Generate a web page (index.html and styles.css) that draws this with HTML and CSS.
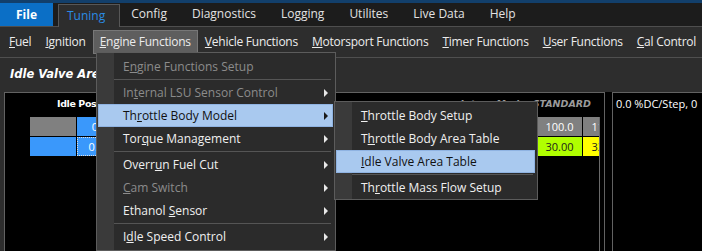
FILE: index.html
```html
<!DOCTYPE html>
<html lang="en">
<head>
    <meta charset="UTF-8">
    <title>Tuning - Idle Valve Area Table</title>
    <link rel="stylesheet" href="styles.css">
</head>
<body>
    <div class="app">
        <div class="topline"></div>
        <div class="tabs">
            <div class="tab file">File</div>
            <div class="tab active">Tuning</div>
            <div class="tab">Config</div>
            <div class="tab">Diagnostics</div>
            <div class="tab">Logging</div>
            <div class="tab">Utilites</div>
            <div class="tab">Live Data</div>
            <div class="tab">Help</div>
        </div>
        <div class="menubar">
            <span class="menu-item"><u>F</u>uel</span>
            <span class="menu-item"><u>I</u>gnition</span>
            <span class="menu-item open"><u>E</u>ngine Functions</span>
            <span class="menu-item"><u>V</u>ehicle Functions</span>
            <span class="menu-item"><u>M</u>otorsport Functions</span>
            <span class="menu-item"><u>T</u>imer Functions</span>
            <span class="menu-item"><u>U</u>ser Functions</span>
            <span class="menu-item"><u>C</u>al Control</span>
        </div>
        <div class="title-row">Idle Valve Area Table</div>
        <div class="workarea">
            <div class="table-panel">
                <div class="panel-head">
                    <span class="axis-title">Idle Position (%)</span>
                    <span class="mode">Interp Mode: STANDARD</span>
                </div>
                <div class="grid-wrap">
                    <div class="grid">
                        <div class="cell corner"></div>
                        <div class="cell head sel">0.0</div>
                        <div class="cell head">10.0</div>
                        <div class="cell head">20.0</div>
                        <div class="cell head">30.0</div>
                        <div class="cell head">40.0</div>
                        <div class="cell head">50.0</div>
                        <div class="cell head">60.0</div>
                        <div class="cell head">70.0</div>
                        <div class="cell head">80.0</div>
                        <div class="cell head">90.0</div>
                        <div class="cell head">100.0</div>
                        <div class="cell head">110.0</div>

                        <div class="cell row-head sel"></div>
                        <div class="cell active">0.00</div>
                        <div class="cell c1">3.00</div>
                        <div class="cell c2">6.00</div>
                        <div class="cell c3">9.00</div>
                        <div class="cell c4">12.00</div>
                        <div class="cell c5">15.00</div>
                        <div class="cell c6">18.00</div>
                        <div class="cell c7">21.00</div>
                        <div class="cell c8">24.00</div>
                        <div class="cell c9">27.00</div>
                        <div class="cell c10">30.00</div>
                        <div class="cell c11">33.00</div>
                    </div>
                </div>
            </div>
            <div class="splitter"></div>
            <div class="info-panel">0.0 %DC/Step, 0</div>
        </div>

        <div class="dropdown main-menu">
            <div class="item disabled"><span>E<u>n</u>gine Functions Setup</span></div>
            <div class="sep"></div>
            <div class="item disabled sub"><span>In<u>t</u>ernal LSU Sensor Control</span></div>
            <div class="item hover sub"><span>Th<u>r</u>ottle Body Model</span></div>
            <div class="item sub"><span>Tor<u>q</u>ue Management</span></div>
            <div class="sep"></div>
            <div class="item sub"><span>Overr<u>u</u>n Fuel Cut</span></div>
            <div class="item disabled sub"><span><u>C</u>am Switch</span></div>
            <div class="item sub"><span>Ethanol <u>S</u>ensor</span></div>
            <div class="sep"></div>
            <div class="item sub"><span>I<u>d</u>le Speed Control</span></div>
        </div>

        <div class="dropdown sub-menu">
            <div class="item"><span><u>T</u>hrottle Body Setup</span></div>
            <div class="item"><span>T<u>h</u>rottle Body Area Table</span></div>
            <div class="item hover"><span><u>I</u>dle Valve Area Table</span></div>
            <div class="sep"></div>
            <div class="item"><span>Th<u>r</u>ottle Mass Flow Setup</span></div>
        </div>
    </div>
</body>
</html>
```

FILE: styles.css
```css
body {
    margin: 0;
    background-color: #2d2d2d;
    font-family: "Open Sans", sans-serif;
    font-size: 12px;
    color: #ececec;
    overflow: hidden;
}

.app {
    position: relative;
    height: 251px;
}

.topline {
    height: 3px;
    background-color: #123f6b;
}

/* ribbon tabs */
.tabs {
    display: flex;
    height: 23px;
    background-color: #1c1c1c;
    border-bottom: 1px solid #4e4e4e;
}

.tab {
    padding: 0 14px 0 8px;
    margin-left: 3px;
    line-height: 22px;
    color: #e2e2e2;
    white-space: nowrap;
}

.tab.file {
    width: 53px;
    margin-left: 0;
    padding: 0;
    text-align: center;
    background-color: #0b6fc6;
    color: #ffffff;
    font-weight: bold;
    line-height: 23px;
}

.tab.active {
    margin-left: 5px;
    margin-top: 1px;
    height: 22px;
    background-color: #2d2d2d;
    border: 1px solid #575757;
    border-bottom: none;
    color: #2a8be4;
}

/* menu bar */
.menubar {
    display: flex;
    align-items: center;
    height: 30px;
    padding-left: 2px;
    border-bottom: 1px solid #4f4f4f;
}

.menu-item {
    padding: 3px 6px;
    line-height: 16px;
    border: 1px solid transparent;
    color: #ececec;
    letter-spacing: -0.24px;
    white-space: nowrap;
}

.menu-item.open {
    background-color: #5e5e5e;
    border-color: #777777;
}

u {
    text-underline-offset: 1px;
}

.title-row {
    height: 34px;
    padding-left: 10px;
    line-height: 32px;
    font-family: "DejaVu Sans", sans-serif;
    font-size: 11.5px;
    font-weight: bold;
    font-style: italic;
    color: #ffffff;
    white-space: nowrap;
}

/* work area */
.workarea {
    display: flex;
    height: 159px;
}

.table-panel {
    display: flex;
    flex-direction: column;
    width: 601px;
    margin-left: 4px;
    box-sizing: border-box;
    background-color: #000000;
    border: 1px solid #626262;
    border-bottom: none;
}

.panel-head {
    display: flex;
    justify-content: space-between;
    height: 24px;
    padding: 0 13px 0 52px;
    line-height: 21px;
    font-family: "DejaVu Sans", sans-serif;
    font-size: 9.5px;
    font-weight: bold;
    white-space: nowrap;
}

.axis-title {
    color: #ffffff;
    letter-spacing: -0.4px;
}

.mode {
    font-style: italic;
    color: #9a9a9a;
}

.grid-wrap {
    flex: 1;
    width: 569px;
    margin-left: 25px;
    overflow: hidden;
    border-right: 1px solid #6a6a6a;
}

.grid {
    display: grid;
    grid-template-columns: 46px repeat(12, 45px);
    grid-auto-rows: 19px;
    gap: 1px;
    width: max-content;
}

.cell {
    line-height: 19px;
    text-align: center;
    font-size: 11px;
    color: #1c1c1c;
}

.cell.corner,
.cell.head {
    background-color: #808080;
    color: #ffffff;
}

.cell.sel {
    background-color: #3a98fb;
    color: #ffffff;
}

.cell.active {
    background-color: #3a98fb;
    color: #ffffff;
    outline: 1px dotted #e0e0e0;
    outline-offset: -1px;
}

.c1 { background-color: #00c8ff; }
.c2 { background-color: #00e0e0; }
.c3 { background-color: #00f0b0; }
.c4 { background-color: #00ff80; }
.c5 { background-color: #30ff40; }
.c6 { background-color: #50ff20; }
.c7 { background-color: #70ff00; }
.c8 { background-color: #88ff00; }
.c9 { background-color: #9cff00; }
.c10 { background-color: #b0ff00; }
.c11 { background-color: #ffff00; }

.splitter {
    width: 7px;
    background-color: #000000;
}

.info-panel {
    flex: 1;
    padding: 3px 3px;
    background-color: #000000;
    border-left: 1px solid #626262;
    border-top: 1px solid #626262;
    font-size: 11px;
    color: #ffffff;
    white-space: nowrap;
    overflow: hidden;
}

/* dropdown menus */
.dropdown {
    position: absolute;
    box-sizing: border-box;
    padding: 2px 0;
    border: 1px solid #5c5c5c;
    background: linear-gradient(to right, #3a3a3a 17px, #2b2b2b 17px);
}

.main-menu {
    left: 96px;
    top: 52px;
    width: 240px;
}

.sub-menu {
    left: 334px;
    top: 101px;
    width: 204px;
    padding-bottom: 0;
}

.item {
    display: flex;
    align-items: center;
    height: 21px;
    margin: 0 2px 0 1px;
    padding-left: 24px;
    border: 1px solid transparent;
    color: #f0f0f0;
    white-space: nowrap;
}

.item.disabled {
    color: #8c8c8c;
}

.item.hover {
    background-color: #a9c9ef;
    border-color: #8fb3e2;
    color: #111111;
}

.item.sub::after {
    content: "";
    margin-left: auto;
    margin-right: 4px;
    border-left: 4px solid #e8e8e8;
    border-top: 4px solid transparent;
    border-bottom: 4px solid transparent;
}

.item.hover.sub::after {
    border-left-color: #1a1a1a;
}

.sep {
    margin: 1px 4px 1px 17px;
    border-top: 1px solid #555555;
}
```
